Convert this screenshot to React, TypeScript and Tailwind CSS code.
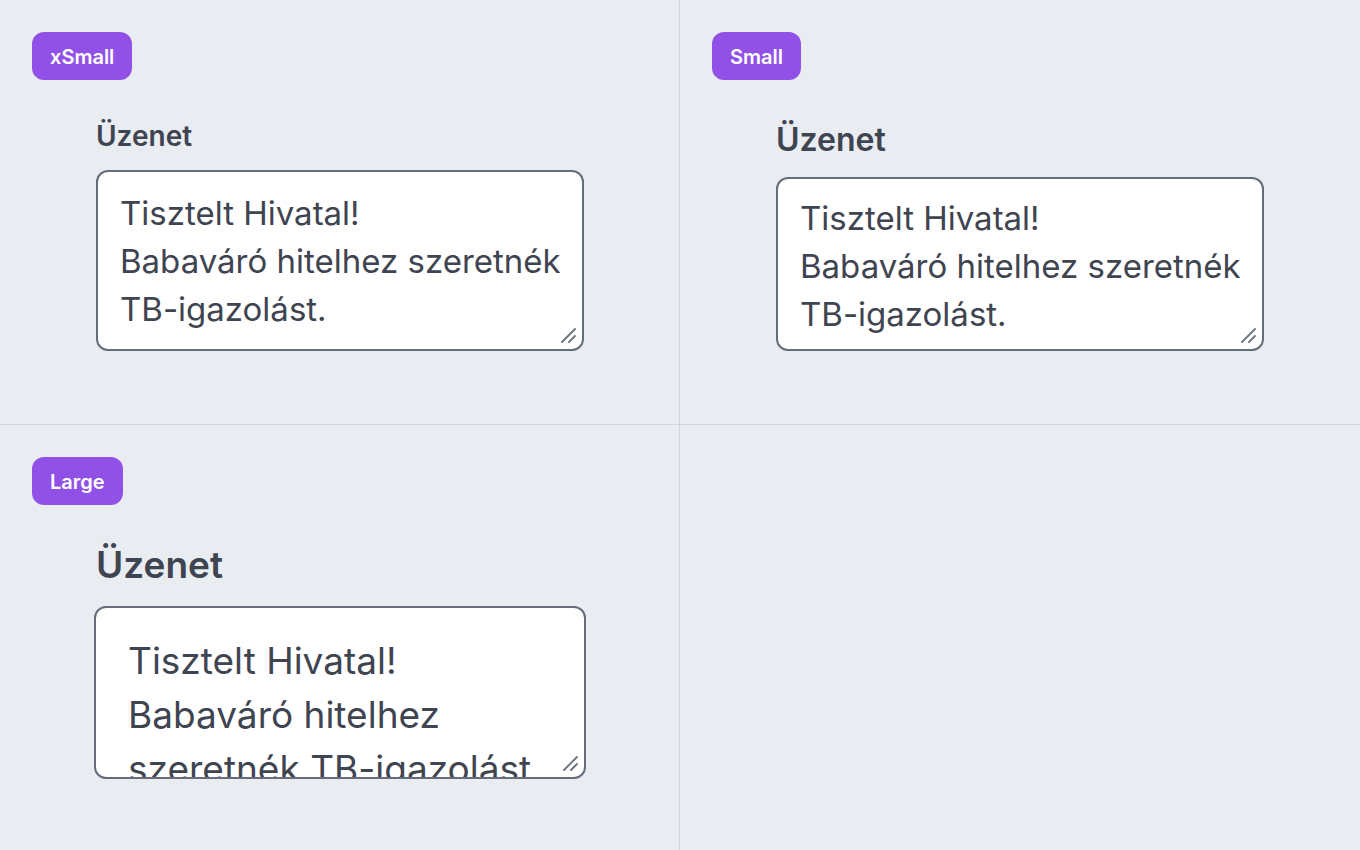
import React from "react";

const MESSAGE = "Tisztelt Hivatal!\nBabaváró hitelhez szeretnék TB-igazolást.";

function Badge({ children }: { children: React.ReactNode }) {
  return (
    <span className="inline-flex h-12 items-center rounded-xl bg-[#9151e6] px-[18px] pt-[2px] text-[20px] font-semibold text-white">
      {children}
    </span>
  );
}

function ResizeHandle() {
  return (
    <svg
      className="pointer-events-none absolute bottom-[6px] right-[6px]"
      width="16"
      height="16"
      viewBox="0 0 16 16"
      fill="none"
      stroke="#6b7280"
      strokeWidth="1.8"
      strokeLinecap="round"
    >
      <line x1="2" y1="15" x2="15" y2="2" />
      <line x1="9" y1="15" x2="15" y2="9" />
    </svg>
  );
}

function Field({
  labelClass,
  boxClass,
  textClass,
}: {
  labelClass: string;
  boxClass: string;
  textClass: string;
}) {
  return (
    <div className="flex flex-col">
      <label className={`font-semibold text-[#3f4451] ${labelClass}`}>Üzenet</label>
      <div className={`relative overflow-hidden rounded-xl border-2 border-[#656c7b] bg-white ${boxClass}`}>
        <textarea
          readOnly
          defaultValue={MESSAGE}
          className={`block h-full w-full resize-none overflow-hidden bg-transparent text-[#3f4451] outline-none ${textClass}`}
        />
        <ResizeHandle />
      </div>
    </div>
  );
}

export default function App() {
  return (
    <div
      className="grid h-[850px] w-[1360px] grid-cols-2 grid-rows-2 bg-[#e9ecf1]"
      style={{ fontFamily: "Inter, 'Noto Sans', sans-serif" }}
    >
      <div className="border-b border-r border-[#d1d5db] p-8">
        <Badge>xSmall</Badge>
        <div className="ml-16 mt-[38px]">
          <Field
            labelClass="text-[28px] leading-[36px] mb-[16px]"
            boxClass="w-[488px] h-[181px]"
            textClass="pl-[22px] pr-[8px] pt-[17px] text-[33px] leading-[48px]"
          />
        </div>
      </div>
      <div className="border-b border-[#d1d5db] p-8">
        <Badge>Small</Badge>
        <div className="ml-16 mt-[40px]">
          <Field
            labelClass="text-[32px] leading-[40px] mb-[17px]"
            boxClass="w-[488px] h-[174px]"
            textClass="pl-[22px] pr-[8px] pt-[15px] text-[33px] leading-[48px]"
          />
        </div>
      </div>
      <div className="border-r border-[#d1d5db] p-8">
        <Badge>Large</Badge>
        <div className="ml-16 mt-[38px]">
          <Field
            labelClass="text-[37px] leading-[44px] mb-[19px]"
            boxClass="w-[492px] h-[173px] -ml-[2px]"
            textClass="px-[32px] pt-[26px] text-[37px] leading-[54px]"
          />
        </div>
      </div>
      <div />
    </div>
  );
}
